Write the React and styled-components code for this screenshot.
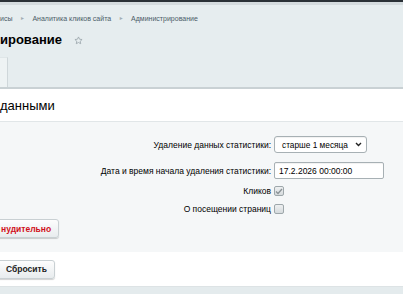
import React from "react";
import styled, { createGlobalStyle } from "styled-components";

const Global = createGlobalStyle`
  html, body { margin: 0; padding: 0; }
  body {
    background: #e4ebed;
    font-family: "Liberation Sans", Arial, sans-serif;
    overflow: hidden;
    width: 403px;
    height: 294px;
  }
`;

const Page = styled.div`
  width: 403px;
  height: 294px;
  display: flex;
  flex-direction: column;
  overflow: hidden;
`;

const TopBar = styled.div`
  height: 2px;
  background: #2a3136;
  flex: none;
`;

const TopEdge = styled.div`
  height: 3px;
  background: #d4dbde;
  flex: none;
`;

const Header = styled.div`
  flex: none;
  background: #e6edef;
  display: flex;
  flex-direction: column;
`;

const Breadcrumbs = styled.div`
  display: flex;
  align-items: center;
  gap: 7.5px;
  height: 12px;
  margin-top: 7px;
  font-size: 7px;
  color: #4b5c68;
  white-space: nowrap;
`;

const Crumb = styled.span``;

const Sep = styled.span`
  font-size: 5px;
  color: #a3aeb4;
`;

const TitleRow = styled.div`
  display: flex;
  align-items: center;
  gap: 12px;
  height: 18px;
  margin-top: 7px;
`;

const Title = styled.h1`
  margin: 0;
  font-size: 13px;
  font-weight: bold;
  color: #000;
  line-height: 18px;
`;

const Star = styled.svg`
  width: 9px;
  height: 9px;
  display: block;
`;

const TabStrip = styled.div`
  margin-top: 8px;
  height: 30px;
  display: flex;
  border-bottom: 2px solid #c9d1d4;
`;

const Tab = styled.div`
  width: 7px;
  background: #eef3f4;
  border-right: 1px solid #cfd7da;
  border-top: 1px solid #dfe6e8;
`;

const Panel = styled.div`
  background: #fff;
  flex: none;
  display: flex;
  flex-direction: column;
`;

const SectionTitle = styled.div`
  height: 32px;
  display: flex;
  align-items: center;
  font-size: 13px;
  color: #000;
  border-bottom: 1px solid #e1e6e8;
`;

const Form = styled.div`
  background: #f5f7f8;
  padding: 14px 0 14px;
  display: flex;
  flex-direction: column;
`;

const Row = styled.div`
  display: grid;
  grid-template-columns: 271px 1fr;
  column-gap: 3px;
  align-items: center;
  height: ${(p) => p.$h}px;
  margin-bottom: ${(p) => p.$mb || 0}px;
`;

const Label = styled.label`
  text-align: right;
  font-size: 8.5px;
  color: #000;
  white-space: nowrap;
`;

const SelectBox = styled.div`
  position: relative;
  width: 93px;
  height: 17px;
  box-sizing: border-box;
  border: 1px solid #a7b0b4;
  border-radius: 3px;
  background: #fff;
  display: flex;
  align-items: center;
  padding-left: 7px;
  font-size: 8.3px;
  color: #000;
  box-shadow: inset 0 1px 1px rgba(0,0,0,0.06);
`;

const Chevron = styled.svg`
  position: absolute;
  right: 4px;
  top: 5px;
  width: 7px;
  height: 5px;
`;

const TextInput = styled.div`
  width: 110px;
  height: 17px;
  box-sizing: border-box;
  border: 1px solid #a7b0b4;
  border-radius: 2px;
  background: #fff;
  display: flex;
  align-items: center;
  padding-left: 4px;
  font-size: 8.5px;
  color: #000;
  box-shadow: inset 0 1px 1px rgba(0,0,0,0.06);
`;

const Check = styled.div`
  width: 10px;
  height: 10px;
  box-sizing: border-box;
  border: 1px solid #9ea7ab;
  border-radius: 2px;
  background: linear-gradient(#eef0f1, #d6dbdd);
  display: flex;
  align-items: center;
  justify-content: center;
`;

const ButtonRow = styled.div`
  display: flex;
  margin-top: ${(p) => p.$mt || 0}px;
`;

const Button = styled.div`
  height: 19px;
  box-sizing: border-box;
  padding: 0 ${(p) => p.$pr}px 0 ${(p) => p.$pl}px;
  margin-left: -4px;
  display: flex;
  align-items: center;
  font-size: 8.5px;
  font-weight: bold;
  color: ${(p) => (p.$danger ? "#d1101a" : "#222")};
  background: linear-gradient(#fdfdfd, #e8ecee);
  border: 1px solid #c9d0d3;
  border-radius: 3px;
  box-shadow: 0 1px 1px rgba(0, 0, 0, 0.18);
  white-space: nowrap;
`;

const Footer = styled.div`
  background: #fff;
  height: 34px;
  display: flex;
  align-items: center;
  border-bottom: 1px solid #dde3e5;
`;

export default function App() {
  return (
    <Page>
      <Global />
      <TopBar />
      <TopEdge />
      <Header>
        <Breadcrumbs>
          <Crumb>исы</Crumb>
          <Sep>►</Sep>
          <Crumb>Аналитика кликов сайта</Crumb>
          <Sep>►</Sep>
          <Crumb>Администрирование</Crumb>
        </Breadcrumbs>
        <TitleRow>
          <Title>ирование</Title>
          <Star viewBox="0 0 24 24">
            <path
              d="M12 2.5l2.9 6.1 6.6.8-4.9 4.6 1.3 6.6L12 17.3l-5.9 3.3 1.3-6.6-4.9-4.6 6.6-.8z"
              fill="none"
              stroke="#9aa5ab"
              strokeWidth="2.2"
              strokeLinejoin="round"
            />
          </Star>
        </TitleRow>
        <TabStrip>
          <Tab />
        </TabStrip>
      </Header>
      <Panel>
        <SectionTitle>данными</SectionTitle>
        <Form>
          <Row $h={17} $mb={9}>
            <Label>Удаление данных статистики:</Label>
            <SelectBox>
              старше 1 месяца
              <Chevron viewBox="0 0 7 5">
                <path d="M1 1l2.5 2.5L6 1" fill="none" stroke="#222" strokeWidth="1.4" />
              </Chevron>
            </SelectBox>
          </Row>
          <Row $h={17} $mb={7}>
            <Label>Дата и время начала удаления статистики:</Label>
            <TextInput>17.2.2026 00:00:00</TextInput>
          </Row>
          <Row $h={10} $mb={8}>
            <Label>Кликов</Label>
            <Check>
              <svg width="8" height="7" viewBox="0 0 8 7">
                <path d="M1 3.5l2 2L7 1" fill="none" stroke="#8a9296" strokeWidth="1.3" />
              </svg>
            </Check>
          </Row>
          <Row $h={10}>
            <Label>О посещении страниц</Label>
            <Check />
          </Row>
          <ButtonRow $mt={5}>
            <Button $danger $pl={4} $pr={7}>нудительно</Button>
          </ButtonRow>
        </Form>
        <Footer>
          <Button $pl={9} $pr={7}>Сбросить</Button>
        </Footer>
      </Panel>
    </Page>
  );
}
